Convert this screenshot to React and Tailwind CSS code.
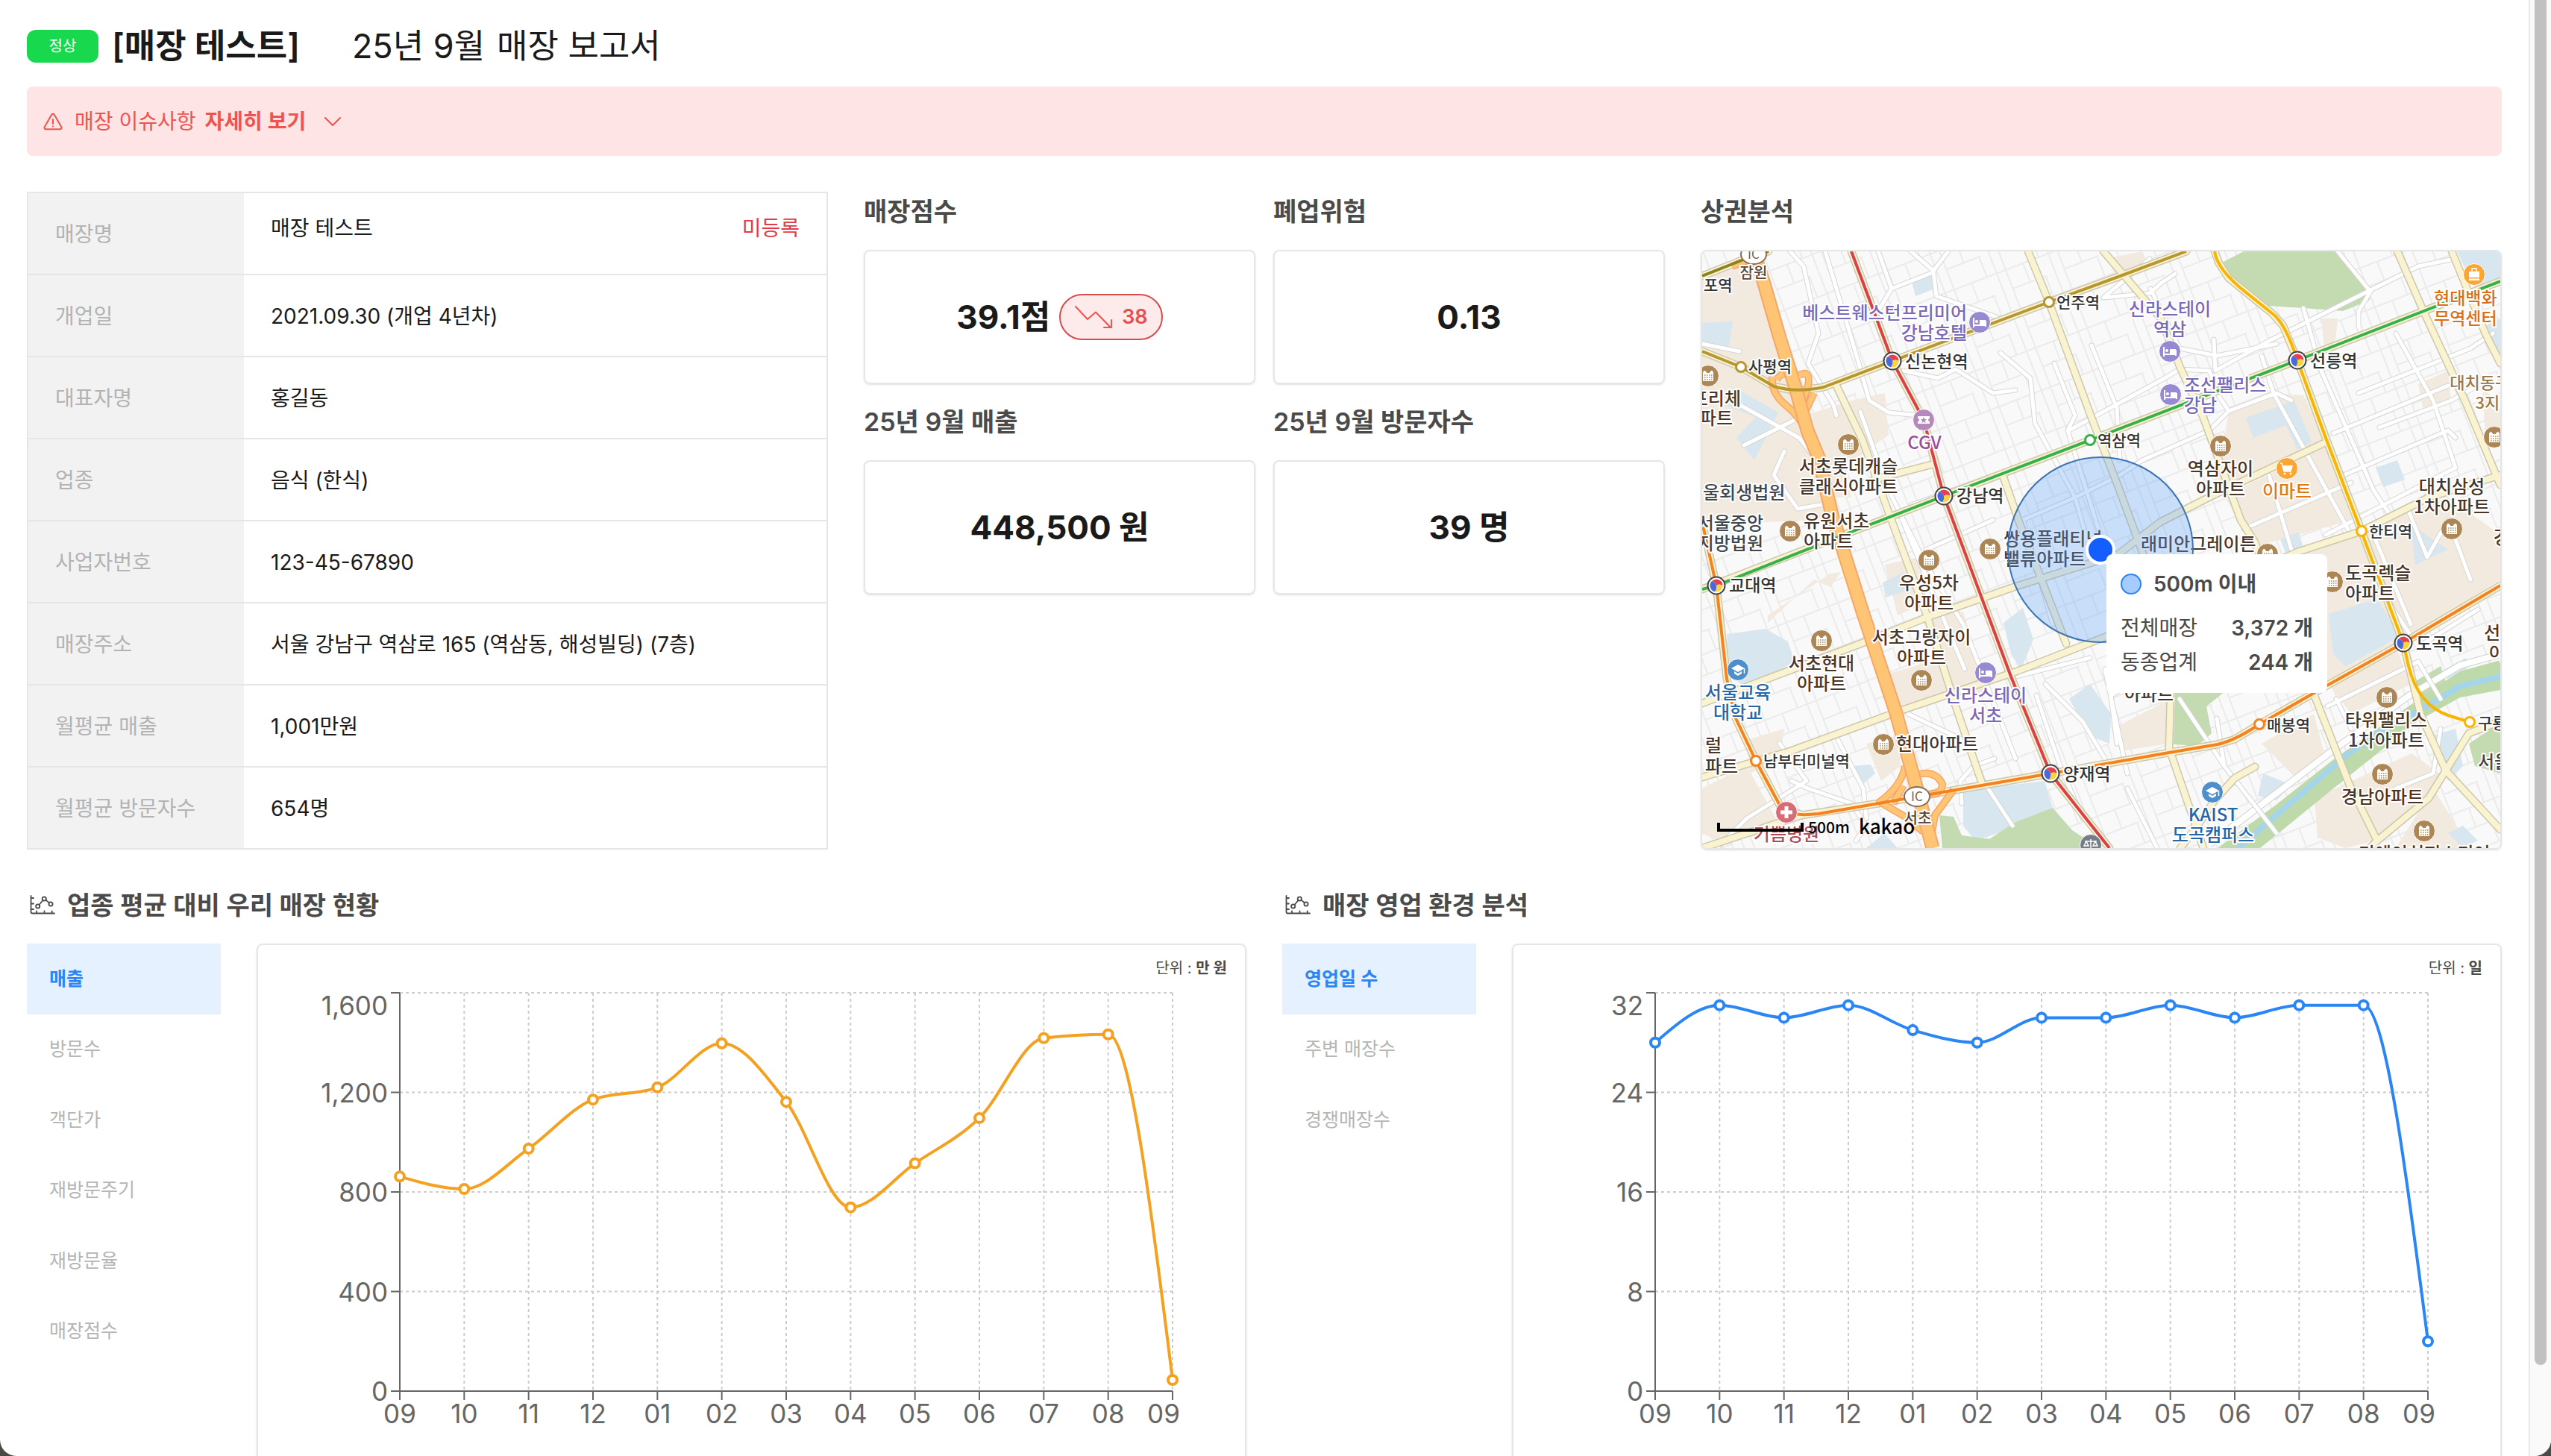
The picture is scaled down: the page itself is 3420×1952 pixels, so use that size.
import { useId, useState } from 'react';
import clsx from 'clsx';

const STORE_ROWS = [
  { label: '매장명', value: '매장 테스트', flag: '미등록' },
  { label: '개업일', value: '2021.09.30 (개업 4년차)' },
  { label: '대표자명', value: '홍길동' },
  { label: '업종', value: '음식 (한식)' },
  { label: '사업자번호', value: '123-45-67890' },
  { label: '매장주소', value: '서울 강남구 역삼로 165 (역삼동, 해성빌딩) (7층)' },
  { label: '월평균 매출', value: '1,001만원' },
  { label: '월평균 방문자수', value: '654명' },
];

const MONTHS = ['09', '10', '11', '12', '01', '02', '03', '04', '05', '06', '07', '08', '09'];

const SALES = {
  unit: '만 원',
  color: '#f5a11f',
  max: 1600,
  ticks: [0, 400, 800, 1200, 1600],
  data: [862, 812, 974, 1171, 1220, 1397, 1162, 738, 915, 1097, 1418, 1433, 45],
};

const OPEN_DAYS = {
  unit: '일',
  color: '#2a86f5',
  max: 32,
  ticks: [0, 8, 16, 24, 32],
  data: [28, 31, 30, 31, 29, 28, 30, 30, 31, 30, 31, 31, 4],
};

/* ---------- icons ---------- */

const WarningIcon = () => (
  <svg viewBox="0 0 26 24" className="h-6 w-[26px]" fill="none" stroke="#ef5350" strokeWidth="2" strokeLinecap="round" strokeLinejoin="round" aria-hidden="true">
    <path d="M11.3 2.6 1.7 19.2A2 2 0 0 0 3.4 22.2H22.6A2 2 0 0 0 24.3 19.2L14.7 2.6A2 2 0 0 0 11.3 2.6Z" />
    <path d="M13 9v6M13 18.2v.3" />
  </svg>
);

const ChevronIcon = () => (
  <svg viewBox="0 0 24 14" className="h-3.5 w-6" fill="none" stroke="#ef5350" strokeWidth="2" strokeLinecap="round" strokeLinejoin="round" aria-hidden="true">
    <path d="M2 2 12 12 22 2" />
  </svg>
);

const DownTrendIcon = () => (
  <svg viewBox="0 0 52 32" className="h-8 w-[52px]" fill="none" stroke="#ef5350" strokeWidth="2" strokeLinecap="round" strokeLinejoin="round" aria-hidden="true">
    <path d="M2 2 18 19 29 9.500 49 30M40 30H50V20" />
  </svg>
);

const ChartDotsIcon = () => (
  <svg viewBox="0 0 36 28" className="h-7 w-9" fill="none" stroke="#4a4a4a" strokeWidth="1.8" strokeLinecap="round" aria-hidden="true">
    <path d="M1.500 2V23.500Q1.500 25.500 3.500 25.500H33" />
    <path d="M2 5H5M2 12.500H5M2 20H5M9 25V22.500M19.500 25V22.500M29.700 25V22.500" />
    <path d="M12.500 14 17.500 8M21.500 7.600 26 11.400" />
    <circle cx="10.700" cy="16" r="2.600" />
    <circle cx="19.300" cy="6" r="2.600" />
    <circle cx="28" cy="13" r="2.600" />
  </svg>
);

/* ---------- line chart ---------- */

// Monotone cubic interpolation (Fritsch–Carlson), same curve as d3's curveMonotoneX.
function monotonePath(pts) {
  const n = pts.length;
  const slope = [];
  for (let i = 0; i < n - 1; i++) {
    slope.push((pts[i + 1][1] - pts[i][1]) / (pts[i + 1][0] - pts[i][0]));
  }
  const t = new Array(n).fill(0);
  for (let i = 1; i < n - 1; i++) {
    const a = slope[i - 1];
    const b = slope[i];
    if (a * b <= 0) continue;
    t[i] = Math.sign(a) * 2 * Math.min(Math.abs(a), Math.abs(b), Math.abs(a + b) / 4);
  }
  t[0] = (3 * slope[0] - t[1]) / 2;
  t[n - 1] = (3 * slope[n - 2] - t[n - 2]) / 2;

  let d = `M${pts[0][0]},${pts[0][1]}`;
  for (let i = 0; i < n - 1; i++) {
    const [x0, y0] = pts[i];
    const [x1, y1] = pts[i + 1];
    const dx = (x1 - x0) / 3;
    d += `C${x0 + dx},${y0 + dx * t[i]},${x1 - dx},${y1 - dx * t[i + 1]},${x1},${y1}`;
  }
  return d;
}

const LEFT = 190;
const RIGHT = 1226;
const TOP = 18;
const BOTTOM = 552;

const LineChart = ({ series, title }) => {
  const { data, max, ticks, color } = series;
  const xAt = (i) => LEFT + (i * (RIGHT - LEFT)) / (data.length - 1);
  const yAt = (v) => BOTTOM - (v / max) * (BOTTOM - TOP);
  const pts = data.map((v, i) => [xAt(i), yAt(v)]);

  return (
    <svg viewBox="0 0 1323 610" className="block w-full" role="img" aria-label={title}>
      <g stroke="#ccc" strokeWidth="2" strokeDasharray="4 4">
        {ticks.slice(1).map((v) => <line key={v} x1={LEFT} y1={yAt(v)} x2={RIGHT} y2={yAt(v)} />)}
        {data.slice(1).map((_, i) => <line key={i} x1={xAt(i + 1)} y1={TOP} x2={xAt(i + 1)} y2={BOTTOM} />)}
      </g>
      <g stroke="#666" strokeWidth="2">
        <path d={`M${LEFT} ${TOP}V${BOTTOM}H${RIGHT}`} fill="none" />
        {ticks.map((v) => <line key={v} x1={LEFT - 12} y1={yAt(v)} x2={LEFT} y2={yAt(v)} />)}
        {data.map((_, i) => <line key={i} x1={xAt(i)} y1={BOTTOM} x2={xAt(i)} y2={BOTTOM + 12} />)}
      </g>
      <g fill="#666" fontSize="35">
        {ticks.map((v) => (
          <text key={v} x={LEFT - 16} y={(v === max ? yAt(v) + 17 : yAt(v)) + 13} textAnchor="end">{v.toLocaleString('en-US')}</text>
        ))}
        {MONTHS.map((m, i) => (
          <text key={i} x={i === MONTHS.length - 1 ? xAt(i) - 12 : xAt(i)} y={BOTTOM + 43} textAnchor="middle">{m}</text>
        ))}
      </g>
      <path d={monotonePath(pts)} fill="none" stroke={color} strokeWidth="4" />
      {pts.map(([x, y], i) => <circle key={i} cx={x} cy={y} r="6" fill="#fff" stroke={color} strokeWidth="4" />)}
    </svg>
  );
};

const ChartSection = ({ title, tabs, series }) => {
  const [active, setActive] = useState(0);
  return (
    <section>
      <h2 className="flex h-[52px] items-center gap-3.5 pl-1 text-[34px] font-semibold text-[#4a4a4a]">
        <ChartDotsIcon />
        {title}
      </h2>
      <div className="mt-[26px] flex gap-12">
        <div role="tablist" className="grid h-[567px] w-[260px] shrink-0 grid-rows-6">
          {tabs.map((t, i) => (
            <button key={t} role="tab" aria-selected={i === active} onClick={() => setActive(i)}
              className={clsx('pl-[30px] text-left text-[25px]', i === active ? 'bg-[#e5f1ff] font-semibold text-[#2a86f5]' : 'text-[#b5b5b5]')}>
              {t}
            </button>
          ))}
        </div>
        <div className="min-w-0 flex-1 rounded-lg border-2 border-[#e6e6e6] pt-4 pb-12 shadow-sm">
          <p className="pr-6 text-right text-[20px] leading-[30px] text-[#4a4a4a]">
            단위 : <b className="font-semibold">{series.unit}</b>
          </p>
          <LineChart series={series} title={title} />
        </div>
      </div>
    </section>
  );
};

/* ---------- map ---------- */

const SUBWAY = {
  gold: '#b8962e', green: '#35b04a', orange: '#f58220', yellow: '#f8b400', red: '#d9404a', olive: '#8a8320',
};

const BEIGE = [
  'M0 40 50 14 78 20 118 170 140 216 168 330 170 360 0 366Z',
  'M144 218 200 200 245 190 250 246 190 290 200 330 176 330Z',
  'M237 570 340 540 366 556 380 590 330 600 266 616Z',
  'M303 490 350 483 372 560 340 578 320 550Z',
  'M245 420 290 410 302 470 262 488Z',
  'M88 498 150 440 172 450 186 430 172 432 88 488Z',
  'M60 655 110 640 104 680 64 700Z',
  'M0 720 60 690 104 770 20 790 0 780Z',
  'M220 660 262 650 266 690 240 710Z',
  'M706 213 760 190 806 193 836 253 750 290 690 320Z',
  'M700 328 836 262 872 360 740 396Z',
  'M806 406 880 376 940 526 838 582 822 500Z',
  'M884 372 1000 330 1070 380 1070 440 945 520Z',
  'M550 640 628 600 626 660 560 670Z',
  'M821 733 951 673 993 703 970 736 902 790 863 800 825 786Z',
  'M750 660 820 620 836 680 800 710Z',
  'M832 570 930 530 950 580 870 620Z',
  'M980 720 1030 800 930 800Z',
  'M1070 210 1046 180 1050 250 1070 260Z',
  'M960 178 1000 160 1004 200 966 210Z',
  'M830 90 852 90 848 130 834 130Z',
  'M550 8 590 0 600 20 570 34Z',
];

const WATER = [
  'M0 96 41 94 36 128 0 124Z',
  'M281 40 311 28 312 50 286 60Z',
  'M42 182 102 216 70 280 46 250 72 222 30 206Z',
  'M33 513 85 506 115 523 124 550 100 563 52 580 36 568Z',
  'M350 723 459 710 470 746 418 773 366 790 350 770Z',
  'M242 444 270 430 276 454 246 464Z',
  'M492 600 520 580 548 620 546 660 520 650Z',
  'M202 690 226 688 232 700 216 714Z',
  'M220 800 244 780 262 800Z',
  'M729 223 794 200 817 256 798 266 783 233 739 250Z',
  'M903 290 932 280 942 306 913 316Z',
  'M1012 0H1070V36L1040 52 1026 30Z',
  'M1050 100 1070 90 1070 160Z',
  'M840 486 905 466 936 516 863 556 846 540Z',
  'M950 366 1000 400 956 420Z',
  'M775 386 800 376 806 398 782 404Z',
  'M996 560 1024 545 1026 568 1000 580Z',
  'M976 650 1010 640 1020 690 1000 710Z',
  'M752 700 790 715 770 736 745 730Z',
  'M1000 780 1020 770 1040 790 1020 800Z',
  'M404 498 430 478 444 520 428 560 414 540Z',
];

const GREENS = [
  'M726 0H852L882 33 898 53 894 66 859 80 806 76 760 73 729 53 706 33 697 15Z',
  'M318 756 337 758 348 783 385 788 418 766 470 746 496 776 533 800H322Z',
  'M634 590 701 590 676 610 683 646 664 663 632 661Z',
  'M1070 632 1028 660 1036 690 1070 700Z',
  'M950 580 990 556 1002 590 968 600Z',
];

const ROADS = [
  'M200 0 255 147 297 226 324 328 414 570 467 700 546 800',
  'M0 134 52 155 96 181 126 187 163 182 255 147 465 68 558 34 649 0',
  'M0 33 63 8 89 0',
  'M0 453 200 376 324 328 520 253 798 146 965 81 1070 40',
  'M0 363 19 448 33 573 45 626 72 683 107 748 133 755',
  'M0 800 133 756 237 740 288 731 467 700 626 672 691 661 714 654 747 634 836 583 940 525 1070 448',
  'M687 0 693 16 706 36 764 83 779 100 798 146 836 250 884 375 940 525 963 620 997 696 1070 775',
  'M180 180 215 253 250 350 302 490 340 610 374 710',
  'M437 0 465 68 522 223 558 316 600 430 628 593 626 666 672 800',
  'M538 0 615 90 641 156 672 223 722 360 741 390 821 596 867 713 905 790',
  'M932 0 967 80 1024 203 1070 313',
  'M1005 0 1050 110 1070 150',
  'M0 606 215 525 303 490 418 450 558 406 614 363 687 326 836 256',
  'M0 705 118 670 274 613 422 563 558 510 798 403 884 375 974 330 1070 300',
  'M230 306 307 286',
  'M403 300 425 363 451 430 488 526',
  'M1070 630 1028 646 997 696 974 733 905 790 895 800',
  'M741 691 714 706 687 736 664 770 641 800',
];

const STREETS = [
  'M118 0 136 20 156 110 142 150 176 206 180 220',
  'M165 0 180 50 210 150 224 200 250 216 290 220',
  'M236 0 254 50 310 28 314 60 372 80 400 90',
  'M280 0 310 26 330 0',
  'M254 50 236 80',
  'M600 10 538 62 600 56 616 42 634 30',
  'M601 50 640 130 690 140 770 124',
  'M270 160 316 170 340 158 390 190 420 186',
  'M400 136 440 170 446 230 500 330 520 400',
  'M472 150 500 220 490 240 540 400',
  'M522 126 556 210 560 280',
  'M492 240 620 170 640 158 680 160 690 190 706 214',
  'M706 214 770 190 790 200',
  'M706 214 680 240 590 280 560 300 500 330 430 360',
  'M686 118 688 160 760 120 800 100 840 80 880 60 960 20 1008 10',
  'M750 140 766 190 870 380',
  'M806 76 830 160 900 320 920 350',
  'M852 0 896 54 880 80 880 100 884 112',
  'M908 236 1004 200 1040 180',
  'M880 190 1030 130 1060 110',
  'M846 244 1000 180',
  'M860 300 1000 240 1010 250',
  'M726 372 870 310',
  'M836 380 1010 290 980 200 930 110',
  'M790 400 760 300',
  'M56 260 140 218',
  'M40 200 130 250 170 300',
  'M0 124 50 134',
  'M110 268 96 300 128 345 170 338',
  'M212 215 250 320 300 420 350 500 420 680',
  'M262 345 310 460 352 560',
  'M280 340 420 290',
  'M300 400 390 360',
  'M430 360 470 500',
  'M420 570 520 545',
  'M276 620 360 660',
  'M348 740 346 710 364 690 392 680',
  'M448 595 480 690 510 760',
  'M460 580 510 630 546 690',
  'M540 560 570 700',
  'M120 710 142 720 200 740 220 770 206 790',
  'M104 660 140 710 60 760 20 800',
  'M182 655 216 720 220 760',
  'M380 715 416 770',
  'M640 600 700 690 770 780',
  'M700 690 690 626',
  'M838 610 960 550 990 600',
  'M850 600 870 640',
  'M900 440 960 530 1040 480',
  'M900 380 950 500',
  'M948 350 972 410 1000 360 1030 440',
  'M556 660 548 596 600 560',
  'M570 720 610 800',
  'M930 720 980 700 990 640',
];

const LABELS = [
  // subway stations
  { t: ['포역'], x: 2, y: 53, s: 21 },
  { t: ['사평역'], x: 62, y: 162, s: 21 },
  { t: ['신논현역'], x: 272, y: 156, s: 23 },
  { t: ['언주역'], x: 475, y: 76, s: 21 },
  { t: ['역삼역'], x: 530, y: 261, s: 21 },
  { t: ['강남역'], x: 341, y: 336, s: 23 },
  { t: ['선릉역'], x: 815, y: 155, s: 23 },
  { t: ['한티역'], x: 894, y: 383, s: 21 },
  { t: ['교대역'], x: 36, y: 456, s: 23 },
  { t: ['남부터미널역'], x: 82, y: 691, s: 21 },
  { t: ['양재역'], x: 484, y: 709, s: 23 },
  { t: ['매봉역'], x: 757, y: 643, s: 21 },
  { t: ['도곡역'], x: 957, y: 534, s: 23 },
  { t: ['구룡역'], x: 1040, y: 640, s: 21 },
  // interchanges
  { t: ['잠원'], x: 69, y: 36, s: 20, a: 'middle', c: '#5b4636' },
  { t: ['서초'], x: 289, y: 767, s: 20, a: 'middle', c: '#5b4636' },
  // hotels
  { t: ['베스트웨스턴프리미어', '강남호텔'], x: 355, y: 91, a: 'end', c: '#7a68b8' },
  { t: ['신라스테이', '역삼'], x: 627, y: 86, a: 'middle', c: '#7a68b8' },
  { t: ['조선팰리스', '강남'], x: 646, y: 188, c: '#7a68b8' },
  { t: ['신라스테이', '서초'], x: 380, y: 604, a: 'middle', c: '#7a68b8' },
  { t: ['CGV'], x: 298, y: 265, a: 'middle', c: '#9a4f9e' },
  // shops, schools, hospital
  { t: ['현대백화', '무역센터'], x: 981, y: 71, s: 23, c: '#d97018' },
  { t: ['이마트'], x: 784, y: 330, a: 'middle', c: '#e07818' },
  { t: ['서울교육', '대학교'], x: 48, y: 600, a: 'middle', c: '#2565a8' },
  { t: ['KAIST', '도곡캠퍼스'], x: 685, y: 764, a: 'middle', c: '#2565a8' },
  { t: ['기쁨병원'], x: 113, y: 790, a: 'middle', c: '#b04a58' },
  { t: ['대치동구마을', '3지구'], x: 1063, y: 184, s: 22, a: 'middle', c: '#98784a' },
  // courts
  { t: ['울회생법원'], x: 1, y: 332, c: '#40484f' },
  { t: ['서울중앙', '지방법원'], x: 82, y: 373, a: 'end', c: '#40484f' },
  { t: ['서울'], x: 1040, y: 693, c: '#40484f' },
  // apartments
  { t: ['프리체'], x: 52, y: 206, a: 'end' },
  { t: ['파트'], x: 41, y: 232, a: 'end' },
  { t: ['서초롯데캐슬', '클래식아파트'], x: 196, y: 297, a: 'middle' },
  { t: ['유원서초', '아파트'], x: 136, y: 370 },
  { t: ['우성5차', '아파트'], x: 304, y: 453, a: 'middle' },
  { t: ['서초그랑자이', '아파트'], x: 294, y: 526, a: 'middle' },
  { t: ['서초현대', '아파트'], x: 160, y: 561, a: 'middle' },
  { t: ['현대아파트'], x: 260, y: 669 },
  { t: ['쌍용플래티넘', '밸류아파트'], x: 404, y: 394 },
  { t: ['래미안그레이튼'], x: 588, y: 401 },
  { t: ['역삼자이', '아파트'], x: 695, y: 300, a: 'middle' },
  { t: ['대치삼성', '1차아파트'], x: 1005, y: 324, a: 'middle' },
  { t: ['도곡렉슬', '아파트'], x: 862, y: 440 },
  { t: ['타워팰리스', '1차아파트'], x: 917, y: 637, a: 'middle' },
  { t: ['경남아파트'], x: 912, y: 740, a: 'middle' },
  { t: ['아파트'], x: 599, y: 602, a: 'middle' },
  { t: ['선경1차', '아파트'], x: 1088, y: 520, a: 'middle' },
  { t: ['럴'], x: 4, y: 671 },
  { t: ['파트'], x: 4, y: 699 },
  { t: ['디에이치퍼스티어'], x: 968, y: 816, a: 'middle' },
  { t: ['강'], x: 1061, y: 392 },
];

const STATIONS = [
  { x: 52, y: 155, c: SUBWAY.gold }, { x: 465, y: 68, c: SUBWAY.gold }, { x: 520, y: 253, c: SUBWAY.green },
  { x: 72, y: 683, c: SUBWAY.orange }, { x: 747, y: 634, c: SUBWAY.orange },
  { x: 884, y: 375, c: SUBWAY.yellow }, { x: 1029, y: 631, c: SUBWAY.yellow },
];

const HUBS = [[255, 147], [324, 328], [798, 146], [19, 448], [467, 700], [940, 525]];

const APARTMENTS = [
  [8, 167], [196, 259], [118, 375], [304, 414], [386, 399], [160, 522], [294, 575], [243, 661],
  [695, 261], [758, 406], [845, 443], [1005, 372], [918, 598], [912, 701], [968, 777], [1062, 249],
];

const HOTELS = [[372, 95], [627, 134], [628, 192], [380, 565]];

const MapPin = ({ x, y, color, children }) => (
  <g transform={`translate(${x} ${y})`}>
    <circle r="14.500" fill={color} stroke="#fff" strokeWidth="1" />
    {children}
  </g>
);

const TradeAreaMap = () => {
  const id = useId();
  return (
    <svg viewBox="0 0 1070 800" preserveAspectRatio="xMidYMid slice" className="block h-full w-full font-['Noto_Sans_CJK_KR',sans-serif]" role="img" aria-label="상권분석 지도">
      <defs>
        <pattern id={`${id}lots`} width="74" height="56" patternUnits="userSpaceOnUse" patternTransform="rotate(-21)">
          <path d="M0 1H74M0 28H50M26 0V28M48 28V56M1 0V56M62 0V56" stroke="#ebebeb" strokeWidth="2" fill="none" />
        </pattern>
      </defs>
      <rect width="1070" height="800" fill="#f9f9f9" />
      <rect width="1070" height="800" fill={`url(#${id}lots)`} />
      {BEIGE.map((d) => <path key={d} d={d} fill="#f2e9df" />)}
      {WATER.map((d) => <path key={d} d={d} fill="#d8e7ef" />)}
      {GREENS.map((d) => <path key={d} d={d} fill="#c4dab0" />)}
      <path d="M691 800 768 743 844 683 947 610 1016 563 1070 548V588L1016 598 959 630 844 722 748 800Z" fill="#bedaab" />
      <path d="M718 800 863 676 921 636 978 606 1016 583 1070 570" fill="none" stroke="#a5d5e8" strokeWidth="8" />
      <path d="M680 795 768 728 844 670 947 596 1016 555 1070 540" fill="none" stroke="#d0d0d0" strokeWidth="10" />
      <path d="M680 795 768 728 844 670 947 596 1016 555 1070 540" fill="none" stroke="#fff" strokeWidth="8" />

      <g fill="none" strokeLinejoin="round" strokeLinecap="round">
        {STREETS.map((d) => <path key={d} d={d} stroke="#d6d6d6" strokeWidth="7" />)}
        {STREETS.map((d) => <path key={d} d={d} stroke="#fff" strokeWidth="5" />)}
        {ROADS.map((d) => <path key={d} d={d} stroke="#cdc7ab" strokeWidth="11" />)}
        {ROADS.map((d) => <path key={d} d={d} stroke="#f9f3d2" strokeWidth="8" />)}
      </g>

      {/* Gyeongbu expressway with its ramps */}
      <g fill="none" strokeLinejoin="round">
        {[['#f6a668', 10], ['#ffc574', 7]].map(([stroke, w]) => (
          <g key={stroke} stroke={stroke} strokeWidth={w}>
            <path d="M40 20 72 8 84 30M94 168 Q92 190 112 206 T142 246M100 172Q112 154 122 178M130 166Q146 158 142 180 L134 204M150 190 136 220 144 250" />
            <path d="M272 690 Q268 716 238 738 L272 758 296 778M286 702 Q312 694 322 714 Q322 728 304 728M337 722 312 756 306 790M270 716 256 740" />
          </g>
        ))}
        {[['#f6a668', 19], ['#ffc574', 15]].map(([stroke, w]) => (
          <path key={stroke} stroke={stroke} strokeWidth={w} d="M72 10 83 43 104 116 126 186 141 240 156 276 174 353 215 483 259 616 285 710 309 800" />
        ))}
      </g>

      <g fill="none" strokeWidth="4" strokeLinejoin="round">
        <path d="M0 33 63 8 89 0" stroke={SUBWAY.olive} />
        <path d="M0 134 52 155 96 181Q126 190 163 182L255 147 465 68 558 34 649 0" stroke={SUBWAY.gold} />
        <path d="M200 0 255 147 297 226 324 328 414 570 467 700 546 800" stroke={SUBWAY.red} />
        <path d="M0 453 19 448 200 376 324 328 520 253 798 146 965 81 1070 40" stroke={SUBWAY.green} />
        <path d="M0 363 19 448 33 573 45 626 72 683 107 748Q120 758 156 754L237 740 288 731 467 700 626 672 691 661Q714 656 747 634L836 583 940 525 1070 448" stroke={SUBWAY.orange} />
        <path d="M687 0Q690 24 729 55L764 83Q782 96 798 146L836 250 879 363 940 525 947 556Q960 608 1000 622L1029 631" stroke={SUBWAY.yellow} />
      </g>

      {STATIONS.map((s) => <circle key={`${s.x}-${s.y}`} cx={s.x} cy={s.y} r="6.500" fill="#fff" stroke={s.c} strokeWidth="3" />)}
      {HUBS.map(([x, y]) => (
        <g key={x} transform={`translate(${x} ${y})`}>
          <circle r="11.500" fill="#fff" stroke="#444" strokeWidth="2" />
          <path d="M-6-6A8.500 8.500 0 0 1 8.500 0Q4-3 0 0Q-1-4-6-6Z" fill="#e8404a" />
          <path d="M8.500 0A8.500 8.500 0 0 1-2 8.300Q1 4 0 0Q4-3 8.500 0Z" fill="#fbd43a" />
          <path d="M-2 8.300A8.500 8.500 0 0 1-6-6Q-1-4 0 0Q1 4-2 8.300Z" fill="#4a6ad8" />
        </g>
      ))}
      {[[69, 4], [288, 731]].map(([x, y]) => (
        <g key={x}>
          <ellipse cx={x} cy={y} rx="17" ry="13" fill="#fff" stroke="#8a6f55" strokeWidth="2" />
          <text x={x} y={y + 6} textAnchor="middle" fontSize="17" fill="#7a6350">IC</text>
        </g>
      ))}

      {APARTMENTS.map(([x, y]) => (
        <MapPin key={`${x}-${y}`} x={x} y={y} color="#ad8655">
          <path d="M-7 7V-5L-5-7.500-2-5V-4H2V-5L5-7.500 7-5V7Z" fill="#fff" />
          <path d="M-5-1H6M-5 2H6M-5 5H6" stroke="#ad8655" strokeWidth="1.500" strokeDasharray="1.500 1.500" />
        </MapPin>
      ))}
      {HOTELS.map(([x, y]) => (
        <MapPin key={`${x}-${y}`} x={x} y={y} color="#978ad2">
          <path d="M-8-6V7M-8 4H8M8 6V-2" stroke="#fff" strokeWidth="2" />
          <path d="M0-3H8V3H0Z" fill="#fff" />
          <circle cx="-4" cy="-1" r="2" fill="#fff" />
        </MapPin>
      ))}
      <MapPin x={297} y={226} color="#b689bd">
        <path d="M-8-5H8V-2A2 2 0 0 0 8 2V5H-8V2A2 2 0 0 0-8-2Z" fill="#fff" />
        <path d="M0-4 1.200-1.200 4-1 2 1 2.600 4 0 2.400-2.600 4-2 1-4-1-1.200-1.200Z" fill="#b689bd" />
      </MapPin>
      <MapPin x={1035} y={31} color="#fba534">
        <path d="M-7-4H7V4H-7ZM-7 5.500H7V8H-7Z" fill="#fff" />
        <path d="M-3-4V-8H3V-4" fill="none" stroke="#fff" strokeWidth="1.500" />
      </MapPin>
      <MapPin x={784} y={291} color="#fba534">
        <path d="M-6-4H8L6 3H-4Z" fill="#fff" />
        <path d="M-9-7H-7L-4 4H6" fill="none" stroke="#fff" strokeWidth="1.500" />
        <circle cx="-3" cy="7" r="1.500" fill="#fff" />
        <circle cx="5" cy="7" r="1.500" fill="#fff" />
      </MapPin>
      {[[48, 561], [684, 725]].map(([x, y]) => (
        <MapPin key={x} x={x} y={y} color="#4d8fcb">
          <path d="M0-7 9-2 0 3-9-2Z" fill="#fff" />
          <path d="M-5 2V5L0 8 5 5V2L0 5Z" fill="#fff" />
          <path d="M8.500-2V5" stroke="#fff" strokeWidth="1.500" />
        </MapPin>
      ))}
      <MapPin x={113} y={752} color="#d86b78">
        <path d="M-2.500-8H2.500V-2.500H8V2.500H2.500V8H-2.500V2.500H-8V-2.500H-2.500Z" fill="#fff" />
      </MapPin>
      <MapPin x={521} y={796} color="#757e86">
        <path d="M0-8V8M-8-5H8M-9 1-6-5-3 1ZM3 1 6-5 9 1Z" fill="none" stroke="#fff" strokeWidth="1.500" />
      </MapPin>

      <g fontWeight="500" stroke="#fff" strokeWidth="4" strokeLinejoin="round" paintOrder="stroke">
        {LABELS.map((l) => (
          <text key={`${l.t[0]}-${l.x}-${l.y}`} textAnchor={l.a || 'start'} fontSize={l.s || 24} fill={l.c || (l.s ? '#333' : '#4a3628')}>
            {l.t.map((line, i) => <tspan key={line} x={l.x} y={l.y + i * 27}>{line}</tspan>)}
          </text>
        ))}
      </g>

      {/* 500m radius around the store */}
      <circle cx="534" cy="400" r="124" fill="#5ba0f8" fillOpacity="0.3" stroke="#3c74b4" strokeWidth="2" />
      <circle cx="534" cy="400" r="18" fill="#145eff" stroke="#fff" strokeWidth="4" />

      <path d="M22 766V776H134V766" fill="none" stroke="#000" strokeWidth="4" />
      <text x="142" y="780" fontSize="21" fontWeight="500">500m</text>
      <text x="210" y="781" fontSize="26" fontWeight="500">kakao</text>
    </svg>
  );
};

/* ---------- page ---------- */

const StatCard = ({ title, children }) => (
  <div>
    <h2 className="h-[52px] text-[34px] leading-[54px] font-semibold text-[#4a4a4a]">{title}</h2>
    <div className="mt-[26px] flex h-[180px] items-center justify-center gap-3 rounded-lg border-2 border-[#e6e6e6] text-[44px] font-bold text-[#1a1a1a] shadow-sm">
      {children}
    </div>
  </div>
);

const StoreTable = () => (
  <table className="w-full table-fixed border-collapse border-2 border-[#e6e6e6] text-[28px] text-[#1a1a1a]">
    <colgroup>
      <col className="w-[290px]" />
      <col />
    </colgroup>
    <tbody>
      {STORE_ROWS.map((r) => (
        <tr key={r.label} className="h-[110px] border-b-2 border-[#e6e6e6]">
          <th scope="row" className="bg-[#f2f2f2] pt-0.5 pl-9 text-left font-normal text-[#b3b3b3]">{r.label}</th>
          <td className="px-9 pt-0.5">
            <div className={clsx('flex justify-between', r.flag && 'pb-4')}>
              <span>{r.value}</span>
              {r.flag && <span className="text-[#e23b4a]">{r.flag}</span>}
            </div>
          </td>
        </tr>
      ))}
    </tbody>
  </table>
);

export default function App() {
  return (
    <div className="h-screen overflow-hidden bg-[#4b4b45] font-['Inter','Noto_Sans_CJK_KR',sans-serif]">
      <div className="flex h-full overflow-hidden rounded-b-[22px] bg-white">
        <main className="min-w-0 flex-1 overflow-hidden px-9 pt-8">
          <header className="flex h-[60px] items-center text-[45px] text-[#1a1a1a]">
            <span className="mr-[18px] flex h-11 w-24 items-center justify-center rounded-xl bg-[#18d94e] text-[20px] text-white">정상</span>
            <h1 className="mr-[70px] font-semibold">[매장 테스트]</h1>
            <p className="flex gap-4"><span>25년 9월</span><span>매장 보고서</span></p>
          </header>

          <button className="mt-6 flex h-[93px] w-full items-center rounded-lg bg-[#fee4e4] pl-[22px] text-[28px] text-[#ef5350]">
            <WarningIcon />
            <span className="ml-4">매장 이슈사항</span>
            <b className="mr-6 ml-3 font-semibold">자세히 보기</b>
            <ChevronIcon />
          </button>

          <div className="mt-12 grid grid-cols-3 gap-12">
            <StoreTable />

            <div className="grid grid-cols-2 content-start gap-6">
              <StatCard title="매장점수">
                39.1점
                <span className="flex h-[62px] items-center gap-3 rounded-full border-2 border-[#d94a4a] bg-[#fdeaea] px-[18px] text-[27px] font-semibold text-[#e25050]">
                  <DownTrendIcon />
                  38
                </span>
              </StatCard>
              <StatCard title="폐업위험">0.13</StatCard>
              <StatCard title="25년 9월 매출">448,500 원</StatCard>
              <StatCard title="25년 9월 방문자수">39 명</StatCard>
            </div>

            <div>
              <h2 className="h-[52px] text-[34px] leading-[54px] font-semibold text-[#4a4a4a]">상권분석</h2>
              <div className="relative mt-[26px] h-[804px] overflow-hidden rounded-lg border-2 border-[#e6e6e6] shadow-sm">
                <TradeAreaMap />
                <div className="absolute top-[406px] left-[542px] w-[296px] rounded-lg bg-white px-[19px] py-[18px] text-[28px] text-[#4a4a4a]">
                  <p className="flex items-center gap-4 leading-[44px] font-semibold">
                    <span className="size-7 rounded-full border-2 border-[#2a86f5] bg-[#a6ccff]" />
                    500m 이내
                  </p>
                  <dl className="mt-3.5 leading-[46px]">
                    <div className="flex justify-between"><dt>전체매장</dt><dd className="font-semibold">3,372 개</dd></div>
                    <div className="flex justify-between"><dt>동종업계</dt><dd className="font-semibold">244 개</dd></div>
                  </dl>
                </div>
              </div>
            </div>
          </div>

          <div className="mt-12 grid grid-cols-2 gap-12">
            <ChartSection
              title="업종 평균 대비 우리 매장 현황"
              tabs={['매출', '방문수', '객단가', '재방문주기', '재방문율', '매장점수']}
              series={SALES}
            />
            <ChartSection title="매장 영업 환경 분석" tabs={['영업일 수', '주변 매장수', '경쟁매장수']} series={OPEN_DAYS} />
          </div>
        </main>

        {/* scrollbar track */}
        <div className="flex w-[30px] flex-col border-l-2 border-[#e8e8e8] bg-[#fafafa] px-1.5">
          <div className="flex-[15] rounded-b-full bg-[#c1c1c1]" />
          <div className="flex-1" />
        </div>
      </div>
    </div>
  );
}
